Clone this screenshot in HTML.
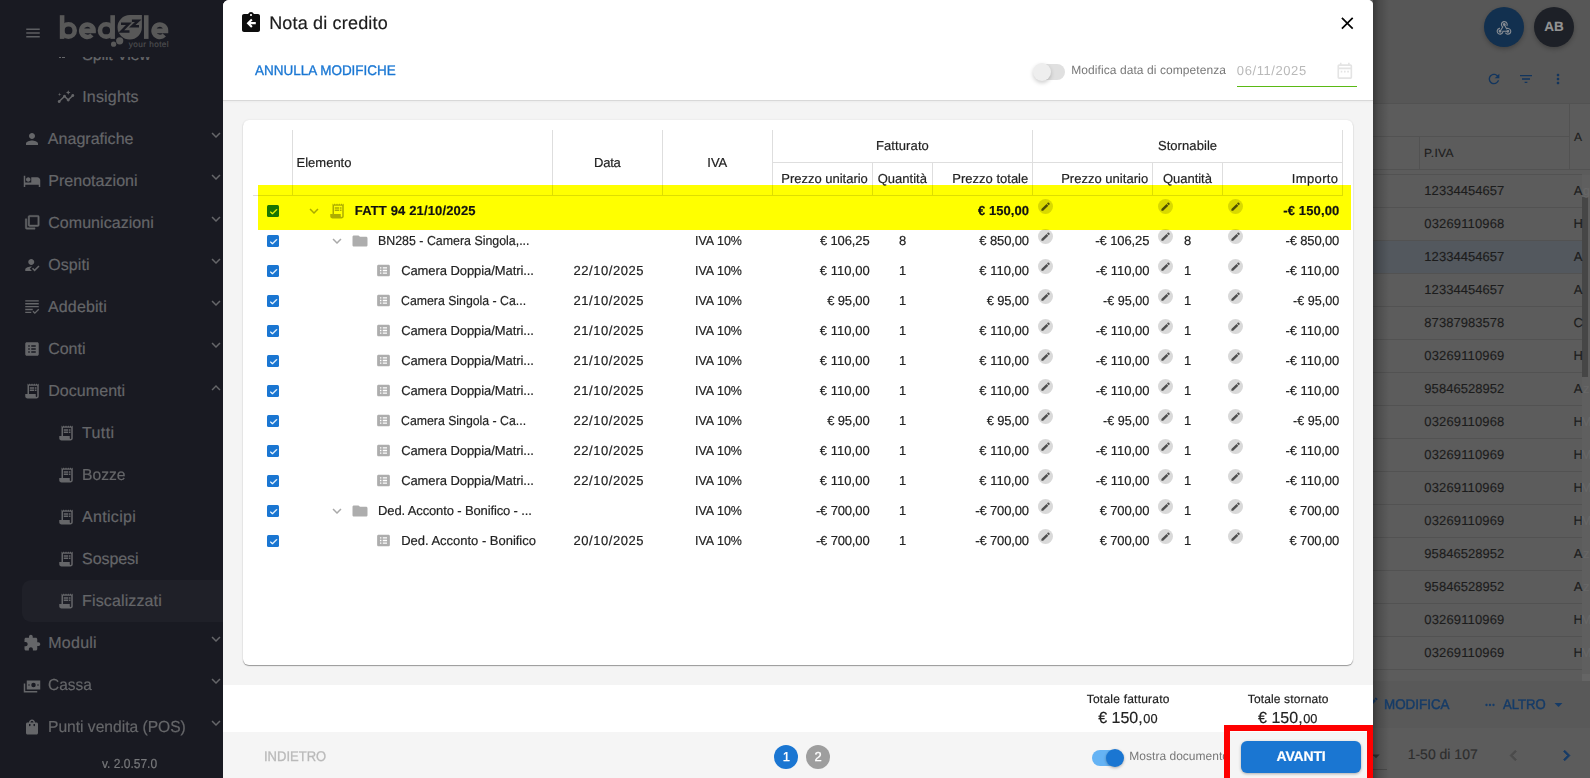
<!DOCTYPE html>
<html lang="it">
<head>
<meta charset="utf-8">
<title>Nota di credito</title>
<style>
*{box-sizing:border-box;margin:0;padding:0}
html,body{width:1590px;height:778px;overflow:hidden;background:#5c5c5c;font-family:"Liberation Sans",sans-serif;text-rendering:geometricPrecision;}
body{position:relative}
.abs{position:absolute;display:block}
.t{position:absolute;white-space:pre;line-height:20px;height:20px;display:block}
#modal .t{-webkit-text-stroke:.18px currentColor}
#side .t{-webkit-text-stroke:.2px currentColor}
#bgp .t{-webkit-text-stroke:.15px currentColor}
#side{position:absolute;left:0;top:0;width:232px;height:778px;background:#191a22;overflow:hidden}
#bgp{position:absolute;left:1373px;top:0;width:217px;height:778px;background:#5c5c5c;overflow:hidden}
#modal{position:absolute;left:223px;top:0;width:1150px;height:778px;background:#f4f4f4;border-radius:6px 5px 0 0;overflow:hidden;isolation:isolate}
#mhead{position:absolute;left:0;top:0;width:1150px;height:100px;background:#fff;box-shadow:0 1px 0 #d8d8d8,0 2px 2px rgba(0,0,0,.04)}
#card{position:absolute;left:20px;top:120px;width:1110px;height:545px;background:#fff;border-radius:6px;box-shadow:0 1px 1px rgba(0,0,0,.36),0 0 2px rgba(0,0,0,.10)}
#totals{position:absolute;left:0;top:685px;width:1150px;height:47px;background:#fff}
#foot{position:absolute;left:0;top:732px;width:1150px;height:46px;background:#f5f5f5}
</style>
</head>
<body>
<div id="bgp">
<div class="abs" style="left:0.00px;top:0.00px;width:217.00px;height:103.00px;background:#575757;"></div>
<div class="abs" style="left:0.00px;top:103.00px;width:217.00px;height:1.00px;background:#525252;"></div>
<div class="abs" style="left:0.00px;top:136.00px;width:196.50px;height:1.00px;background:#525252;"></div>
<div class="abs" style="left:0.00px;top:169.00px;width:217.00px;height:1.00px;background:#525252;"></div>
<div class="abs" style="left:46.00px;top:136.00px;width:1.00px;height:33.00px;background:#525252;"></div>
<div class="abs" style="left:196.00px;top:103.00px;width:1.00px;height:66.00px;background:#525252;"></div>
<div class="abs" style="left:0.00px;top:240.50px;width:209.00px;height:33.00px;background:#53585e;"></div>
<div class="abs" style="left:0.00px;top:174.00px;width:209.00px;height:1.00px;background:#525252;"></div>
<div class="abs" style="left:0.00px;top:207.00px;width:209.00px;height:1.00px;background:#525252;"></div>
<div class="abs" style="left:0.00px;top:240.00px;width:209.00px;height:1.00px;background:#525252;"></div>
<div class="abs" style="left:0.00px;top:273.00px;width:209.00px;height:1.00px;background:#525252;"></div>
<div class="abs" style="left:0.00px;top:306.00px;width:209.00px;height:1.00px;background:#525252;"></div>
<div class="abs" style="left:0.00px;top:339.00px;width:209.00px;height:1.00px;background:#525252;"></div>
<div class="abs" style="left:0.00px;top:372.00px;width:209.00px;height:1.00px;background:#525252;"></div>
<div class="abs" style="left:0.00px;top:405.00px;width:209.00px;height:1.00px;background:#525252;"></div>
<div class="abs" style="left:0.00px;top:438.00px;width:209.00px;height:1.00px;background:#525252;"></div>
<div class="abs" style="left:0.00px;top:471.00px;width:209.00px;height:1.00px;background:#525252;"></div>
<div class="abs" style="left:0.00px;top:504.00px;width:209.00px;height:1.00px;background:#525252;"></div>
<div class="abs" style="left:0.00px;top:537.00px;width:209.00px;height:1.00px;background:#525252;"></div>
<div class="abs" style="left:0.00px;top:570.00px;width:209.00px;height:1.00px;background:#525252;"></div>
<div class="abs" style="left:0.00px;top:603.00px;width:209.00px;height:1.00px;background:#525252;"></div>
<div class="abs" style="left:0.00px;top:636.00px;width:209.00px;height:1.00px;background:#525252;"></div>
<div class="abs" style="left:0.00px;top:669.00px;width:209.00px;height:1.00px;background:#525252;"></div>
<div class="abs" style="left:209.00px;top:174.50px;width:8.00px;height:499.00px;background:#5f5f5f;"></div>
<div class="abs" style="left:209.00px;top:197.00px;width:6.00px;height:180.00px;background:#464646;"></div>
<div class="abs" style="left:209.00px;top:673.50px;width:8.00px;height:7.00px;background:#656565;"></div>
<div class="abs" style="left:0.00px;top:681.00px;width:217.00px;height:47.00px;background:#595959;"></div>
<div class="abs" style="left:0.00px;top:728.00px;width:217.00px;height:50.00px;background:#5c5c5c;"></div>
<div class="abs" style="left:0.00px;top:769.00px;width:14.00px;height:1.00px;background:#4a4a4a;"></div>
<div class="abs" style="left:111.0px;top:6.800px;width:40px;height:40px;border-radius:50%;background:#12304f;box-shadow:0 2px 4px rgba(0,0,0,.25)"></div>
<div class="abs" style="left:161.0px;top:6.800px;width:40px;height:40px;border-radius:50%;background:#1d2027;box-shadow:0 2px 4px rgba(0,0,0,.25)"></div>
<svg class="abs" style="left:122.00px;top:18.50px;" width="18.00" height="18.00" viewBox="0 0 24 24" fill="#878c93" fill-rule="evenodd"><path d="M10.460,19C9,21.070 6.150,21.590 4.090,20.150C2.040,18.710 1.560,15.840 3,13.750C3.870,12.500 5.210,11.830 6.580,11.770L6.630,13.200C5.720,13.270 4.840,13.740 4.270,14.560C3.270,16 3.580,17.940 4.950,18.910C6.330,19.870 8.260,19.500 9.260,18.070C9.570,17.620 9.750,17.130 9.820,16.630V15.620L15.400,15.580L15.470,15.470C16,14.550 17.150,14.230 18.050,14.750C18.950,15.270 19.260,16.430 18.730,17.350C18.200,18.260 17.040,18.580 16.140,18.060C15.730,17.830 15.440,17.460 15.310,17.040L11.240,17.060C11.130,17.730 10.870,18.380 10.460,19M17.740,11.860C20.270,12.170 22.070,14.440 21.760,16.930C21.450,19.430 19.150,21.200 16.620,20.890C15.130,20.710 13.900,19.860 13.190,18.680L14.430,17.960C14.920,18.730 15.750,19.280 16.750,19.410C18.500,19.620 20.050,18.430 20.260,16.760C20.470,15.090 19.230,13.560 17.500,13.350C16.960,13.290 16.440,13.360 15.970,13.530L15.120,13.970L12.540,9.200H12.320C11.260,9.160 10.440,8.290 10.470,7.250C10.500,6.210 11.400,5.400 12.450,5.440C13.500,5.500 14.330,6.350 14.300,7.390C14.280,7.830 14.110,8.230 13.840,8.540L15.740,12.050C16.360,11.850 17.040,11.780 17.740,11.860M8.250,9.140C7.250,6.790 8.310,4.100 10.620,3.120C12.940,2.140 15.620,3.250 16.620,5.600C17.210,6.970 17.090,8.470 16.420,9.670L15.180,8.950C15.600,8.140 15.670,7.150 15.270,6.220C14.590,4.620 12.780,3.850 11.230,4.500C9.670,5.160 8.970,7 9.650,8.600C9.930,9.260 10.400,9.770 10.970,10.110L11.360,10.320L8.290,15.310C8.320,15.360 8.360,15.420 8.390,15.500C8.880,16.410 8.540,17.560 7.620,18.050C6.710,18.540 5.560,18.180 5.060,17.240C4.570,16.310 4.910,15.160 5.830,14.670C6.220,14.460 6.650,14.410 7.060,14.500L9.370,10.730C8.900,10.300 8.500,9.760 8.250,9.140Z"/></svg>
<svg class="abs" style="left:113.20px;top:71.10px;" width="16.00" height="16.00" viewBox="0 0 24 24" fill="#12355e" fill-rule="evenodd"><path d="M17.650 6.350C16.200 4.900 14.210 4 12 4c-4.420 0-7.990 3.580-7.990 8s3.570 8 7.990 8c3.730 0 6.840-2.550 7.730-6h-2.080c-.820 2.330-3.040 4-5.650 4-3.310 0-6-2.690-6-6s2.690-6 6-6c1.660 0 3.140.690 4.220 1.780L13 11h7V4l-2.350 2.350z"/></svg>
<svg class="abs" style="left:145.20px;top:71.10px;" width="16.00" height="16.00" viewBox="0 0 24 24" fill="#12355e" fill-rule="evenodd"><path d="M10 18h4v-2h-4v2zM3 6v2h18V6H3zm3 7h12v-2H6v2z"/></svg>
<svg class="abs" style="left:177.00px;top:71.10px;" width="16.00" height="16.00" viewBox="0 0 24 24" fill="#12355e" fill-rule="evenodd"><path d="M12 8c1.100 0 2-.900 2-2s-.900-2-2-2-2 .900-2 2 .900 2 2 2zm0 2c-1.100 0-2 .900-2 2s.900 2 2 2 2-.900 2-2-.900-2-2-2zm0 6c-1.100 0-2 .900-2 2s.900 2 2 2 2-.900 2-2-.900-2-2-2z"/></svg>
<svg class="abs" style="left:109.50px;top:698.00px;" width="14.00" height="14.00" viewBox="0 0 24 24" fill="#153b67" fill-rule="evenodd"><path d="M6 10c-1.100 0-2 .900-2 2s.900 2 2 2 2-.900 2-2-.900-2-2-2zm12 0c-1.100 0-2 .900-2 2s.900 2 2 2 2-.900 2-2-.900-2-2-2zm-6 0c-1.100 0-2 .900-2 2s.900 2 2 2 2-.900 2-2-.900-2-2-2z"/></svg>
<svg class="abs" style="left:176.10px;top:695.30px;" width="19.00" height="19.00" viewBox="0 0 24 24" fill="#153b67" fill-rule="evenodd"><path d="M7 10l5 5 5-5z"/></svg>
<svg class="abs" style="left:-6.50px;top:695.50px;" width="12.00" height="12.00" viewBox="0 0 24 24" fill="#153b67" fill-rule="evenodd"><path d="M3 17.250V21h3.750L17.810 9.940l-3.750-3.750L3 17.250zM20.710 7.040c.390-.390.390-1.020 0-1.410l-2.340-2.340c-.390-.390-1.020-.390-1.410 0l-1.830 1.830 3.750 3.750 1.830-1.830z"/></svg>
<svg class="abs" style="left:130.40px;top:745.10px;stroke:#4b4b4b;stroke-width:.8px;" width="21.00" height="21.00" viewBox="0 0 24 24" fill="#4b4b4b" fill-rule="evenodd"><path d="M15.410 7.410L14 6l-6 6 6 6 1.410-1.410L10.830 12z"/></svg>
<svg class="abs" style="left:182.70px;top:745.10px;stroke:#153b67;stroke-width:.8px;" width="21.00" height="21.00" viewBox="0 0 24 24" fill="#153b67" fill-rule="evenodd"><path d="M10 6L8.590 7.410 13.170 12l-4.580 4.590L10 18l6-6z"/></svg>
<svg class="abs" style="left:-6.50px;top:746.50px;" width="18.00" height="18.00" viewBox="0 0 24 24" fill="#333" fill-rule="evenodd"><path d="M7 10l5 5 5-5z"/></svg>
<div class="abs" style="left:0;top:0;width:16px;height:778px;background:linear-gradient(90deg,rgba(0,0,0,.34),rgba(0,0,0,.16) 35%,rgba(0,0,0,0))"></div>
<span class="t" style="left:171.30px;top:17px;font-size:13.5px;font-weight:700;color:#939393;letter-spacing:0.000px;">AB</span>
<span class="t" style="left:51.05px;top:143px;font-size:12px;color:#1c1c1c;letter-spacing:0.287px;">P.IVA</span>
<span class="t" style="left:200.99px;top:127px;font-size:12px;color:#1c1c1c;letter-spacing:0.000px;">A</span>
<span class="t" style="left:51.35px;top:181px;font-size:13px;color:#1c1c1c;letter-spacing:0.047px;">12334454657</span>
<span class="t" style="left:200.76px;top:181px;font-size:13px;color:#1c1c1c;letter-spacing:0.000px;">A</span>
<span class="t" style="left:209.63px;top:181px;font-size:13px;color:#686868;letter-spacing:0.000px;">g</span>
<span class="t" style="left:51.35px;top:214px;font-size:13px;color:#1c1c1c;letter-spacing:0.142px;">03269110968</span>
<span class="t" style="left:200.40px;top:214px;font-size:13px;color:#1c1c1c;letter-spacing:0.000px;">H</span>
<span class="t" style="left:51.35px;top:247px;font-size:13px;color:#1c1c1c;letter-spacing:0.047px;">12334454657</span>
<span class="t" style="left:200.76px;top:247px;font-size:13px;color:#1c1c1c;letter-spacing:0.000px;">A</span>
<span class="t" style="left:51.35px;top:280px;font-size:13px;color:#1c1c1c;letter-spacing:0.047px;">12334454657</span>
<span class="t" style="left:200.76px;top:280px;font-size:13px;color:#1c1c1c;letter-spacing:0.000px;">A</span>
<span class="t" style="left:51.35px;top:313px;font-size:13px;color:#1c1c1c;letter-spacing:0.047px;">87387983578</span>
<span class="t" style="left:200.40px;top:313px;font-size:13px;color:#1c1c1c;letter-spacing:0.000px;">C</span>
<span class="t" style="left:51.35px;top:346px;font-size:13px;color:#1c1c1c;letter-spacing:0.142px;">03269110969</span>
<span class="t" style="left:200.40px;top:346px;font-size:13px;color:#1c1c1c;letter-spacing:0.000px;">H</span>
<span class="t" style="left:51.35px;top:379px;font-size:13px;color:#1c1c1c;letter-spacing:0.047px;">95846528952</span>
<span class="t" style="left:200.76px;top:379px;font-size:13px;color:#1c1c1c;letter-spacing:0.000px;">A</span>
<span class="t" style="left:210.00px;top:379px;font-size:13px;color:#686868;letter-spacing:0.000px;">z</span>
<span class="t" style="left:51.35px;top:412px;font-size:13px;color:#1c1c1c;letter-spacing:0.142px;">03269110968</span>
<span class="t" style="left:200.40px;top:412px;font-size:13px;color:#1c1c1c;letter-spacing:0.000px;">H</span>
<span class="t" style="left:207.83px;top:412px;font-size:13px;color:#686868;letter-spacing:0.000px;">M</span>
<span class="t" style="left:51.35px;top:445px;font-size:13px;color:#1c1c1c;letter-spacing:0.142px;">03269110969</span>
<span class="t" style="left:200.40px;top:445px;font-size:13px;color:#1c1c1c;letter-spacing:0.000px;">H</span>
<span class="t" style="left:207.83px;top:445px;font-size:13px;color:#686868;letter-spacing:0.000px;">M</span>
<span class="t" style="left:51.35px;top:478px;font-size:13px;color:#1c1c1c;letter-spacing:0.142px;">03269110969</span>
<span class="t" style="left:200.40px;top:478px;font-size:13px;color:#1c1c1c;letter-spacing:0.000px;">H</span>
<span class="t" style="left:207.83px;top:478px;font-size:13px;color:#686868;letter-spacing:0.000px;">M</span>
<span class="t" style="left:51.35px;top:511px;font-size:13px;color:#1c1c1c;letter-spacing:0.142px;">03269110969</span>
<span class="t" style="left:200.40px;top:511px;font-size:13px;color:#1c1c1c;letter-spacing:0.000px;">H</span>
<span class="t" style="left:207.83px;top:511px;font-size:13px;color:#686868;letter-spacing:0.000px;">M</span>
<span class="t" style="left:51.35px;top:544px;font-size:13px;color:#1c1c1c;letter-spacing:0.047px;">95846528952</span>
<span class="t" style="left:200.76px;top:544px;font-size:13px;color:#1c1c1c;letter-spacing:0.000px;">A</span>
<span class="t" style="left:210.00px;top:544px;font-size:13px;color:#686868;letter-spacing:0.000px;">z</span>
<span class="t" style="left:51.35px;top:577px;font-size:13px;color:#1c1c1c;letter-spacing:0.047px;">95846528952</span>
<span class="t" style="left:200.76px;top:577px;font-size:13px;color:#1c1c1c;letter-spacing:0.000px;">A</span>
<span class="t" style="left:210.00px;top:577px;font-size:13px;color:#686868;letter-spacing:0.000px;">z</span>
<span class="t" style="left:51.35px;top:610px;font-size:13px;color:#1c1c1c;letter-spacing:0.142px;">03269110969</span>
<span class="t" style="left:200.40px;top:610px;font-size:13px;color:#1c1c1c;letter-spacing:0.000px;">H</span>
<span class="t" style="left:207.83px;top:610px;font-size:13px;color:#686868;letter-spacing:0.000px;">M</span>
<span class="t" style="left:51.35px;top:643px;font-size:13px;color:#1c1c1c;letter-spacing:0.142px;">03269110969</span>
<span class="t" style="left:200.40px;top:643px;font-size:13px;color:#1c1c1c;letter-spacing:0.000px;">H</span>
<span class="t" style="left:207.83px;top:643px;font-size:13px;color:#686868;letter-spacing:0.000px;">M</span>
<span class="t" style="left:11.25px;top:694px;font-size:14px;color:#153b67;letter-spacing:0.000px;-webkit-text-stroke:.45px #153b67;transform:scaleX(0.9569);transform-origin:0 0;">MODIFICA</span>
<span class="t" style="left:129.55px;top:694px;font-size:14px;color:#153b67;letter-spacing:0.000px;-webkit-text-stroke:.45px #153b67;transform:scaleX(0.9356);transform-origin:0 0;">ALTRO</span>
<span class="t" style="left:34.65px;top:744px;font-size:14px;color:#2d2d2d;letter-spacing:0.004px;">1-50 di 107</span>
</div>
<div id="side">
<svg class="abs" style="left:24.00px;top:24.10px;" width="18.00" height="18.00" viewBox="0 0 24 24" fill="#5d5e62" fill-rule="evenodd"><path d="M3 18h18v-2H3v2zm0-5h18v-2H3v2zm0-7v2h18V6H3z"/></svg>
<svg class="abs" style="left:0;top:0" width="223" height="56" viewBox="0 0 223 56">
<g fill="none" stroke="#585858" stroke-width="4.6">
<path d="M62.1 15.200V38.900"/><circle cx="68.500" cy="30.450" r="6.200"/>
<path d="M80.600 30.900H93.600A6.200 6.200 0 1 0 91.900 35"/>
<circle cx="106.200" cy="30.450" r="6.200"/><path d="M112.650 15.200V38.900"/>
<path d="M146.250 15.200V38.900"/>
<path d="M153 30.900H166A6.200 6.200 0 1 0 164.300 35"/>
</g>
<path fill="#585858" d="M129.700 15.100H141.900V27.300A12.200 12.200 0 1 1 129.700 15.100z"/>
<circle cx="119.700" cy="40.800" r="3.600" fill="#585858"/><circle cx="113.600" cy="44.200" r="2.600" fill="#585858"/>
<g fill="none" stroke="#191a22" stroke-width="2.500"><path d="M121 23.800H128.800L121.300 31.500H129.500"/><path d="M131.900 20.700H138.300L132.200 26.300H139"/></g>
</svg>
<div class="abs" style="left:22px;top:580px;width:201px;height:42px;background:#1f2028;border-radius:9px 0 0 9px"></div>
<svg class="abs" style="left:57.20px;top:87.70px;" width="18.00" height="18.00" viewBox="0 0 24 24" fill="#656669" fill-rule="evenodd"><path d="M21 8c-1.45 0-2.26 1.44-1.93 2.51l-3.55 3.56c-.3-.09-.74-.09-1.04 0l-2.55-2.55C12.27 10.45 11.46 9 10 9c-1.45 0-2.27 1.44-1.93 2.52l-4.56 4.55C2.44 15.74 1 16.55 1 18c0 1.1.9 2 2 2 1.45 0 2.26-1.44 1.93-2.51l4.55-4.56c.3.09.74.09 1.04 0l2.55 2.55C12.73 16.55 13.54 18 15 18c1.45 0 2.27-1.44 1.93-2.52l3.56-3.55c1.07.33 2.51-.48 2.51-1.93 0-1.1-.9-2-2-2zM15 9l.94-2.07L18 6l-2.06-.93L15 3l-.92 2.07L12 6l2.08.93zM3.5 11L4 9l2-.5L4 8l-.5-2L3 8l-2 .5L3 9z"/></svg>
<svg class="abs" style="left:23.10px;top:129.70px;" width="18.00" height="18.00" viewBox="0 0 24 24" fill="#656669" fill-rule="evenodd"><path d="M12 12c2.21 0 4-1.79 4-4s-1.79-4-4-4-4 1.79-4 4 1.79 4 4 4zm0 2c-2.67 0-8 1.34-8 4v2h16v-2c0-2.66-5.33-4-8-4z"/></svg>
<svg class="abs" style="left:23.10px;top:171.70px;" width="18.00" height="18.00" viewBox="0 0 24 24" fill="#656669" fill-rule="evenodd"><path d="M7 13c1.66 0 3-1.34 3-3S8.660 7 7 7s-3 1.34-3 3 1.34 3 3 3zm12-6h-8v7H3V5H1v15h2v-3h18v3h2v-9c0-2.21-1.79-4-4-4z"/></svg>
<svg class="abs" style="left:23.80px;top:214.30px;stroke:#656669;stroke-width:.7px;" width="16.60" height="16.60" viewBox="0 0 24 24" fill="#656669" fill-rule="evenodd"><path d="M20,16V4H8V16H20M22,16A2,2 0 0,1 20,18H8C6.890,18 6,17.100 6,16V4C6,2.890 6.890,2 8,2H20A2,2 0 0,1 22,4V16M16,20V22H4A2,2 0 0,1 2,20V7H4V20H16Z"/></svg>
<svg class="abs" style="left:23.10px;top:255.70px;" width="18.00" height="18.00" viewBox="0 0 24 24" fill="#656669" fill-rule="evenodd"><path d="M9 17l3-2.940c-.39-.04-.68-.06-1-.06-2.670 0-8 1.340-8 4v2h9l-3-3zm2-5c2.210 0 4-1.790 4-4s-1.790-4-4-4-4 1.790-4 4 1.790 4 4 4zm4.470 8.500L12 17l1.400-1.410 2.070 2.080 5.130-5.170 1.400 1.410z"/></svg>
<svg class="abs" style="left:23.10px;top:297.70px;" width="18.00" height="18.00" viewBox="0 0 24 24" fill="#656669" fill-rule="evenodd"><path d="M3 3h18v1.800H3zM3 6.800h18v1.800H3zM3 10.600h18v1.800H3zM3 14.400h10v1.800H3zM3 18.200h8v1.800H3zM15.800 21.400l-3.200-3.200 1.200-1.200 2 2 4.600-4.600 1.200 1.200z"/></svg>
<svg class="abs" style="left:23.10px;top:339.70px;" width="18.00" height="18.00" viewBox="0 0 24 24" fill="#656669" fill-rule="evenodd"><path d="M19 3H5c-1.100 0-2 .900-2 2v14c0 1.100.900 2 2 2h14c1.100 0 2-.900 2-2V5c0-1.100-.900-2-2-2zM9 17H7v-2h2v2zm0-4H7v-2h2v2zm0-4H7V7h2v2zm8 8h-6v-2h6v2zm0-4h-6v-2h6v2zm0-4h-6V7h6v2z"/></svg>
<svg class="abs" style="left:23.10px;top:381.70px;" width="18.00" height="18.00" viewBox="0 0 24 24" fill="#656669" fill-rule="evenodd"><path d="M19.500 3.500L18 2l-1.500 1.500L15 2l-1.500 1.500L12 2l-1.500 1.500L9 2 7.500 3.500 6 2v14H3v3c0 1.660 1.340 3 3 3h12c1.660 0 3-1.340 3-3V2l-1.500 1.500zM19 19c0 .550-.450 1-1 1s-1-.450-1-1v-3H8V5h11v14zM9 7h6v2H9zM16 7h2v2h-2zM9 10h6v2H9zM16 10h2v2h-2z"/></svg>
<svg class="abs" style="left:57.20px;top:423.70px;" width="18.00" height="18.00" viewBox="0 0 24 24" fill="#656669" fill-rule="evenodd"><path d="M19.500 3.500L18 2l-1.500 1.500L15 2l-1.500 1.500L12 2l-1.500 1.500L9 2 7.500 3.500 6 2v14H3v3c0 1.660 1.340 3 3 3h12c1.660 0 3-1.340 3-3V2l-1.500 1.500zM19 19c0 .550-.450 1-1 1s-1-.450-1-1v-3H8V5h11v14zM9 7h6v2H9zM16 7h2v2h-2zM9 10h6v2H9zM16 10h2v2h-2z"/></svg>
<svg class="abs" style="left:57.20px;top:465.70px;" width="18.00" height="18.00" viewBox="0 0 24 24" fill="#656669" fill-rule="evenodd"><path d="M19.500 3.500L18 2l-1.500 1.500L15 2l-1.500 1.500L12 2l-1.500 1.500L9 2 7.500 3.500 6 2v14H3v3c0 1.660 1.340 3 3 3h12c1.660 0 3-1.340 3-3V2l-1.500 1.500zM19 19c0 .550-.450 1-1 1s-1-.450-1-1v-3H8V5h11v14zM9 7h6v2H9zM16 7h2v2h-2zM9 10h6v2H9zM16 10h2v2h-2z"/></svg>
<svg class="abs" style="left:57.20px;top:507.70px;" width="18.00" height="18.00" viewBox="0 0 24 24" fill="#656669" fill-rule="evenodd"><path d="M19.500 3.500L18 2l-1.500 1.500L15 2l-1.500 1.500L12 2l-1.500 1.500L9 2 7.500 3.500 6 2v14H3v3c0 1.660 1.340 3 3 3h12c1.660 0 3-1.340 3-3V2l-1.500 1.500zM19 19c0 .550-.450 1-1 1s-1-.450-1-1v-3H8V5h11v14zM9 7h6v2H9zM16 7h2v2h-2zM9 10h6v2H9zM16 10h2v2h-2z"/></svg>
<svg class="abs" style="left:57.20px;top:549.70px;" width="18.00" height="18.00" viewBox="0 0 24 24" fill="#656669" fill-rule="evenodd"><path d="M19.500 3.500L18 2l-1.500 1.500L15 2l-1.500 1.500L12 2l-1.500 1.500L9 2 7.500 3.500 6 2v14H3v3c0 1.660 1.340 3 3 3h12c1.660 0 3-1.340 3-3V2l-1.500 1.500zM19 19c0 .550-.450 1-1 1s-1-.450-1-1v-3H8V5h11v14zM9 7h6v2H9zM16 7h2v2h-2zM9 10h6v2H9zM16 10h2v2h-2z"/></svg>
<svg class="abs" style="left:57.20px;top:591.70px;" width="18.00" height="18.00" viewBox="0 0 24 24" fill="#656669" fill-rule="evenodd"><path d="M19.500 3.500L18 2l-1.500 1.500L15 2l-1.500 1.500L12 2l-1.500 1.500L9 2 7.500 3.500 6 2v14H3v3c0 1.660 1.340 3 3 3h12c1.660 0 3-1.340 3-3V2l-1.500 1.500zM19 19c0 .550-.450 1-1 1s-1-.450-1-1v-3H8V5h11v14zM9 7h6v2H9zM16 7h2v2h-2zM9 10h6v2H9zM16 10h2v2h-2z"/></svg>
<svg class="abs" style="left:23.10px;top:633.70px;" width="18.00" height="18.00" viewBox="0 0 24 24" fill="#656669" fill-rule="evenodd"><path d="M20.500 11H19V7c0-1.100-.900-2-2-2h-4V3.500C13 2.120 11.880 1 10.500 1S8 2.120 8 3.500V5H4c-1.100 0-1.990.900-1.990 2v3.800H3.500c1.490 0 2.700 1.210 2.700 2.700s-1.210 2.700-2.700 2.700H2V20c0 1.100.900 2 2 2h3.800v-1.500c0-1.490 1.210-2.700 2.700-2.700 1.490 0 2.700 1.210 2.700 2.700V22H17c1.100 0 2-.900 2-2v-4h1.500c1.380 0 2.500-1.120 2.500-2.500S21.880 11 20.500 11z"/></svg>
<svg class="abs" style="left:23.10px;top:675.70px;" width="18.00" height="18.00" viewBox="0 0 24 24" fill="#656669" fill-rule="evenodd"><path d="M5 6h18v12H5zM14 9a3 3 0 1 0 0 6a3 3 0 1 0 0-6zM8 11a1 1 0 1 0 0 2a1 1 0 1 0 0-2zM20 11a1 1 0 1 0 0 2a1 1 0 1 0 0-2zM1 10h2v10h16v2H1z"/></svg>
<svg class="abs" style="left:23.10px;top:717.70px;" width="18.00" height="18.00" viewBox="0 0 24 24" fill="#656669" fill-rule="evenodd"><path d="M18 6h-2c0-2.210-1.790-4-4-4S8 3.790 8 6H6c-1.100 0-2 .900-2 2v12c0 1.100.900 2 2 2h12c1.100 0 2-.900 2-2V8c0-1.100-.900-2-2-2zm-8 4c0 .550-.450 1-1 1s-1-.450-1-1V8h2v2zm2-6c1.100 0 2 .900 2 2h-4c0-1.100.900-2 2-2zm4 6c0 .550-.450 1-1 1s-1-.450-1-1V8h2v2z"/></svg>
<svg class="abs" style="left:206.90px;top:126.10px;" width="18.00" height="18.00" viewBox="0 0 24 24" fill="#656669" fill-rule="evenodd"><path d="M7.410 8.590L12 13.170l4.590-4.580L18 10l-6 6-6-6 1.410-1.410z"/></svg>
<svg class="abs" style="left:206.90px;top:168.10px;" width="18.00" height="18.00" viewBox="0 0 24 24" fill="#656669" fill-rule="evenodd"><path d="M7.410 8.590L12 13.170l4.590-4.580L18 10l-6 6-6-6 1.410-1.410z"/></svg>
<svg class="abs" style="left:206.90px;top:210.10px;" width="18.00" height="18.00" viewBox="0 0 24 24" fill="#656669" fill-rule="evenodd"><path d="M7.410 8.590L12 13.170l4.590-4.580L18 10l-6 6-6-6 1.410-1.410z"/></svg>
<svg class="abs" style="left:206.90px;top:252.10px;" width="18.00" height="18.00" viewBox="0 0 24 24" fill="#656669" fill-rule="evenodd"><path d="M7.410 8.590L12 13.170l4.590-4.580L18 10l-6 6-6-6 1.410-1.410z"/></svg>
<svg class="abs" style="left:206.90px;top:294.10px;" width="18.00" height="18.00" viewBox="0 0 24 24" fill="#656669" fill-rule="evenodd"><path d="M7.410 8.590L12 13.170l4.590-4.580L18 10l-6 6-6-6 1.410-1.410z"/></svg>
<svg class="abs" style="left:206.90px;top:336.10px;" width="18.00" height="18.00" viewBox="0 0 24 24" fill="#656669" fill-rule="evenodd"><path d="M7.410 8.590L12 13.170l4.590-4.580L18 10l-6 6-6-6 1.410-1.410z"/></svg>
<svg class="abs" style="left:206.90px;top:630.10px;" width="18.00" height="18.00" viewBox="0 0 24 24" fill="#656669" fill-rule="evenodd"><path d="M7.410 8.590L12 13.170l4.590-4.580L18 10l-6 6-6-6 1.410-1.410z"/></svg>
<svg class="abs" style="left:206.90px;top:672.10px;" width="18.00" height="18.00" viewBox="0 0 24 24" fill="#656669" fill-rule="evenodd"><path d="M7.410 8.590L12 13.170l4.590-4.580L18 10l-6 6-6-6 1.410-1.410z"/></svg>
<svg class="abs" style="left:206.90px;top:714.10px;" width="18.00" height="18.00" viewBox="0 0 24 24" fill="#656669" fill-rule="evenodd"><path d="M7.410 8.590L12 13.170l4.590-4.580L18 10l-6 6-6-6 1.410-1.410z"/></svg>
<svg class="abs" style="left:206.90px;top:379.10px;" width="18.00" height="18.00" viewBox="0 0 24 24" fill="#656669" fill-rule="evenodd"><path d="M12 8l-6 6 1.410 1.410L12 10.830l4.590 4.580L18 14z"/></svg>
<div class="abs" style="left:0;top:57px;width:223px;height:10px;overflow:hidden"><div class="abs" style="left:0;top:-57px;width:223px;height:80px"><span class="t" style="left:82.25px;top:46px;font-size:16px;color:#656669;letter-spacing:-0.152px;">Split View</span><div class="abs" style="left:59px;top:56px;width:2.400px;height:2.300px;background:#656669"></div><div class="abs" style="left:62.200px;top:56px;width:2.400px;height:2.300px;background:#656669"></div></div></div>
<span class="t" style="left:128.85px;top:35px;font-size:8.2px;color:#4c4c4e;letter-spacing:0.426px;">your hotel</span>
<span class="t" style="left:82.25px;top:88px;font-size:16px;color:#656669;letter-spacing:0.166px;">Insights</span>
<span class="t" style="left:47.85px;top:130px;font-size:16px;color:#656669;letter-spacing:0.021px;">Anagrafiche</span>
<span class="t" style="left:48.25px;top:172px;font-size:16px;color:#656669;letter-spacing:0.032px;">Prenotazioni</span>
<span class="t" style="left:48.25px;top:214px;font-size:16px;color:#656669;letter-spacing:0.047px;">Comunicazioni</span>
<span class="t" style="left:48.25px;top:256px;font-size:16px;color:#656669;letter-spacing:0.059px;">Ospiti</span>
<span class="t" style="left:48.05px;top:298px;font-size:16px;color:#656669;letter-spacing:0.125px;">Addebiti</span>
<span class="t" style="left:48.25px;top:340px;font-size:16px;color:#656669;letter-spacing:-0.040px;">Conti</span>
<span class="t" style="left:48.25px;top:382px;font-size:16px;color:#656669;letter-spacing:0.052px;">Documenti</span>
<span class="t" style="left:82.05px;top:424px;font-size:16px;color:#656669;letter-spacing:0.367px;">Tutti</span>
<span class="t" style="left:82.05px;top:466px;font-size:16px;color:#656669;letter-spacing:0.000px;transform:scaleX(0.9782);transform-origin:0 0;">Bozze</span>
<span class="t" style="left:82.05px;top:508px;font-size:16px;color:#656669;letter-spacing:0.303px;">Anticipi</span>
<span class="t" style="left:82.05px;top:550px;font-size:16px;color:#656669;letter-spacing:-0.070px;">Sospesi</span>
<span class="t" style="left:82.05px;top:592px;font-size:16px;color:#656669;letter-spacing:0.133px;">Fiscalizzati</span>
<span class="t" style="left:48.25px;top:634px;font-size:16px;color:#656669;letter-spacing:0.252px;">Moduli</span>
<span class="t" style="left:48.25px;top:676px;font-size:16px;color:#656669;letter-spacing:0.000px;transform:scaleX(0.9656);transform-origin:0 0;">Cassa</span>
<span class="t" style="left:48.25px;top:718px;font-size:16px;color:#656669;letter-spacing:0.000px;transform:scaleX(0.9745);transform-origin:0 0;">Punti vendita (POS)</span>
<span class="t" style="left:101.55px;top:754px;font-size:13px;color:#77787b;letter-spacing:0.000px;transform:scaleX(0.9222);transform-origin:0 0;">v. 2.0.57.0</span>
</div>
<div id="modal">
<div id="mhead"></div>
<svg class="abs" style="left:16.10px;top:11.30px;" width="24.00" height="24.00" viewBox="0 0 24 24" fill="#0d0d0d" fill-rule="evenodd"><path d="M19 3h-4.180C14.400 1.840 13.300 1 12 1c-1.300 0-2.400.840-2.820 2H5c-1.100 0-2 .900-2 2v14c0 1.100.900 2 2 2h14c1.100 0 2-.900 2-2V5c0-1.100-.900-2-2-2zm-7 0c.550 0 1 .450 1 1s-.450 1-1 1-1-.450-1-1 .450-1 1-1zM16.800 13.300h-5.100l1.900 1.900-1.500 1.500-4.500-4.500 4.500-4.500 1.500 1.500-1.900 1.900h5.100z"/></svg>
<svg class="abs" style="left:1113.60px;top:12.60px;" width="20.60" height="20.60" viewBox="0 0 24 24" fill="#050505" fill-rule="evenodd"><path d="M19 6.410L17.590 5 12 10.590 6.410 5 5 6.410 10.590 12 5 17.590 6.410 19 12 13.410 17.590 19 19 17.590 13.410 12z"/></svg>
<div class="abs" style="left:812.5px;top:64px;width:29.500px;height:16px;border-radius:8px;background:#e0e0e0"></div>
<div class="abs" style="left:810.0px;top:63.100px;width:18px;height:18px;border-radius:50%;background:#eee;box-shadow:0 2px 4px rgba(0,0,0,.2)"></div>
<svg class="abs" style="left:1112.30px;top:60.90px;" width="19.60" height="19.60" viewBox="0 0 24 24" fill="#e4e4e4" fill-rule="evenodd"><path d="M19 4h-1V2h-2v2H8V2H6v2H5c-1.110 0-1.990.900-1.990 2L3 20c0 1.100.890 2 2 2h14c1.100 0 2-.900 2-2V6c0-1.100-.900-2-2-2zm0 16H5V10h14v10zm0-12H5V6h14v2zM9 14H7v-2h2v2zm4 0h-2v-2h2v2zm4 0h-2v-2h2v2z"/></svg>
<div class="abs" style="left:1014.0px;top:85.600px;width:120px;height:1.400px;background:#5ab914"></div>
<div id="card"></div>
<div class="abs" style="left:69.00px;top:130.00px;width:1.00px;height:65.00px;background:#dedede"></div>
<div class="abs" style="left:329.00px;top:130.00px;width:1.00px;height:65.00px;background:#dedede"></div>
<div class="abs" style="left:439.00px;top:130.00px;width:1.00px;height:65.00px;background:#dedede"></div>
<div class="abs" style="left:549.00px;top:130.00px;width:1.00px;height:65.00px;background:#dedede"></div>
<div class="abs" style="left:809.00px;top:130.00px;width:1.00px;height:65.00px;background:#dedede"></div>
<div class="abs" style="left:1119.00px;top:130.00px;width:1.00px;height:65.00px;background:#dedede"></div>
<div class="abs" style="left:649.00px;top:162.00px;width:1.00px;height:33.00px;background:#dedede"></div>
<div class="abs" style="left:709.00px;top:162.00px;width:1.00px;height:33.00px;background:#dedede"></div>
<div class="abs" style="left:929.00px;top:162.00px;width:1.00px;height:33.00px;background:#dedede"></div>
<div class="abs" style="left:999.00px;top:162.00px;width:1.00px;height:33.00px;background:#dedede"></div>
<div class="abs" style="left:549.00px;top:162.00px;width:571.00px;height:1.00px;background:#dedede"></div>
<div class="abs" style="left:30.00px;top:195.00px;width:1090.00px;height:1.00px;background:#dedede"></div>
<div class="abs" style="left:43.7px;top:204.7px;width:12.800px;height:12.600px;border-radius:1.500px;background:#1a76d2"></div>
<svg class="abs" style="left:45.70px;top:206.50px;stroke:#fff;stroke-width:1.500px;" width="9.20" height="9.20" viewBox="0 0 24 24" fill="#fff" fill-rule="evenodd"><path d="M9 16.170L4.830 12l-1.420 1.410L9 19 21 7l-1.410-1.410z"/></svg>
<svg class="abs" style="left:82.30px;top:201.90px;" width="18.00" height="18.00" viewBox="0 0 24 24" fill="#a9a9a9" fill-rule="evenodd"><path d="M7.410 8.590L12 13.170l4.590-4.580L18 10l-6 6-6-6 1.410-1.410z"/></svg>
<svg class="abs" style="left:105.40px;top:202.00px;" width="18.00" height="18.00" viewBox="0 0 24 24" fill="#adadad" fill-rule="evenodd"><path d="M19.500 3.500L18 2l-1.500 1.500L15 2l-1.500 1.500L12 2l-1.500 1.500L9 2 7.500 3.500 6 2v14H3v3c0 1.660 1.340 3 3 3h12c1.660 0 3-1.340 3-3V2l-1.500 1.500zM19 19c0 .550-.450 1-1 1s-1-.450-1-1v-3H8V5h11v14zM9 7h6v2H9zM16 7h2v2h-2zM9 10h6v2H9zM16 10h2v2h-2z"/></svg>
<div class="abs" style="left:815.0px;top:198.9px;width:15px;height:15px;border-radius:50%;background:#d9d9d9"></div>
<svg class="abs" style="left:817.20px;top:201.00px;" width="11.20" height="11.20" viewBox="0 0 24 24" fill="#4f4f4f" fill-rule="evenodd"><path d="M3 17.250V21h3.750L17.810 9.940l-3.750-3.750L3 17.250zM20.710 7.040c.390-.390.390-1.020 0-1.410l-2.340-2.340c-.390-.390-1.020-.390-1.410 0l-1.830 1.830 3.750 3.750 1.830-1.830z"/></svg>
<div class="abs" style="left:935.0px;top:198.9px;width:15px;height:15px;border-radius:50%;background:#d9d9d9"></div>
<svg class="abs" style="left:937.20px;top:201.00px;" width="11.20" height="11.20" viewBox="0 0 24 24" fill="#4f4f4f" fill-rule="evenodd"><path d="M3 17.250V21h3.750L17.810 9.940l-3.750-3.750L3 17.250zM20.710 7.040c.390-.390.390-1.020 0-1.410l-2.340-2.340c-.390-.390-1.020-.390-1.410 0l-1.830 1.830 3.750 3.750 1.830-1.830z"/></svg>
<div class="abs" style="left:1005.0px;top:198.9px;width:15px;height:15px;border-radius:50%;background:#d9d9d9"></div>
<svg class="abs" style="left:1007.20px;top:201.00px;" width="11.20" height="11.20" viewBox="0 0 24 24" fill="#4f4f4f" fill-rule="evenodd"><path d="M3 17.250V21h3.750L17.810 9.940l-3.750-3.750L3 17.250zM20.710 7.040c.390-.390.390-1.020 0-1.410l-2.340-2.340c-.390-.390-1.020-.390-1.410 0l-1.830 1.830 3.750 3.750 1.830-1.830z"/></svg>
<div class="abs" style="left:43.7px;top:234.7px;width:12.800px;height:12.600px;border-radius:1.500px;background:#1a76d2"></div>
<svg class="abs" style="left:45.70px;top:236.50px;stroke:#fff;stroke-width:1.500px;" width="9.20" height="9.20" viewBox="0 0 24 24" fill="#fff" fill-rule="evenodd"><path d="M9 16.170L4.830 12l-1.420 1.410L9 19 21 7l-1.410-1.410z"/></svg>
<svg class="abs" style="left:104.90px;top:231.90px;" width="18.00" height="18.00" viewBox="0 0 24 24" fill="#a9a9a9" fill-rule="evenodd"><path d="M7.410 8.590L12 13.170l4.590-4.580L18 10l-6 6-6-6 1.410-1.410z"/></svg>
<svg class="abs" style="left:128.20px;top:231.80px;transform:scaleY(.92);" width="18.00" height="18.00" viewBox="0 0 24 24" fill="#adadad" fill-rule="evenodd"><path d="M10 4H4c-1.100 0-1.990.900-1.990 2L2 18c0 1.100.900 2 2 2h16c1.100 0 2-.900 2-2V8c0-1.100-.900-2-2-2h-8l-2-2z"/></svg>
<div class="abs" style="left:815.0px;top:228.9px;width:15px;height:15px;border-radius:50%;background:#d9d9d9"></div>
<svg class="abs" style="left:817.20px;top:231.00px;" width="11.20" height="11.20" viewBox="0 0 24 24" fill="#4f4f4f" fill-rule="evenodd"><path d="M3 17.250V21h3.750L17.810 9.940l-3.750-3.750L3 17.250zM20.710 7.040c.390-.390.390-1.020 0-1.410l-2.340-2.340c-.390-.390-1.020-.390-1.410 0l-1.830 1.830 3.750 3.750 1.830-1.830z"/></svg>
<div class="abs" style="left:935.0px;top:228.9px;width:15px;height:15px;border-radius:50%;background:#d9d9d9"></div>
<svg class="abs" style="left:937.20px;top:231.00px;" width="11.20" height="11.20" viewBox="0 0 24 24" fill="#4f4f4f" fill-rule="evenodd"><path d="M3 17.250V21h3.750L17.810 9.940l-3.750-3.750L3 17.250zM20.710 7.040c.390-.390.390-1.020 0-1.410l-2.340-2.340c-.390-.390-1.020-.390-1.410 0l-1.830 1.830 3.750 3.750 1.830-1.830z"/></svg>
<div class="abs" style="left:1005.0px;top:228.9px;width:15px;height:15px;border-radius:50%;background:#d9d9d9"></div>
<svg class="abs" style="left:1007.20px;top:231.00px;" width="11.20" height="11.20" viewBox="0 0 24 24" fill="#4f4f4f" fill-rule="evenodd"><path d="M3 17.250V21h3.750L17.810 9.940l-3.750-3.750L3 17.250zM20.710 7.040c.390-.390.390-1.020 0-1.410l-2.340-2.340c-.390-.390-1.020-.390-1.410 0l-1.830 1.830 3.750 3.750 1.830-1.830z"/></svg>
<div class="abs" style="left:43.7px;top:264.7px;width:12.800px;height:12.600px;border-radius:1.500px;background:#1a76d2"></div>
<svg class="abs" style="left:45.70px;top:266.50px;stroke:#fff;stroke-width:1.500px;" width="9.20" height="9.20" viewBox="0 0 24 24" fill="#fff" fill-rule="evenodd"><path d="M9 16.170L4.830 12l-1.420 1.410L9 19 21 7l-1.410-1.410z"/></svg>
<svg class="abs" style="left:151.50px;top:262.00px;transform:scaleY(.92);" width="17.00" height="17.00" viewBox="0 0 24 24" fill="#adadad" fill-rule="evenodd"><path d="M19 3H5c-1.100 0-2 .900-2 2v14c0 1.100.900 2 2 2h14c1.100 0 2-.900 2-2V5c0-1.100-.900-2-2-2zM9 17H7v-2h2v2zm0-4H7v-2h2v2zm0-4H7V7h2v2zm8 8h-6v-2h6v2zm0-4h-6v-2h6v2zm0-4h-6V7h6v2z"/></svg>
<div class="abs" style="left:815.0px;top:258.9px;width:15px;height:15px;border-radius:50%;background:#d9d9d9"></div>
<svg class="abs" style="left:817.20px;top:261.00px;" width="11.20" height="11.20" viewBox="0 0 24 24" fill="#4f4f4f" fill-rule="evenodd"><path d="M3 17.250V21h3.750L17.810 9.940l-3.750-3.750L3 17.250zM20.710 7.040c.390-.390.390-1.020 0-1.410l-2.340-2.340c-.390-.390-1.020-.390-1.410 0l-1.830 1.830 3.750 3.750 1.830-1.830z"/></svg>
<div class="abs" style="left:935.0px;top:258.9px;width:15px;height:15px;border-radius:50%;background:#d9d9d9"></div>
<svg class="abs" style="left:937.20px;top:261.00px;" width="11.20" height="11.20" viewBox="0 0 24 24" fill="#4f4f4f" fill-rule="evenodd"><path d="M3 17.250V21h3.750L17.810 9.940l-3.750-3.750L3 17.250zM20.710 7.040c.390-.390.390-1.020 0-1.410l-2.340-2.340c-.390-.390-1.020-.390-1.410 0l-1.830 1.830 3.750 3.750 1.830-1.830z"/></svg>
<div class="abs" style="left:1005.0px;top:258.9px;width:15px;height:15px;border-radius:50%;background:#d9d9d9"></div>
<svg class="abs" style="left:1007.20px;top:261.00px;" width="11.20" height="11.20" viewBox="0 0 24 24" fill="#4f4f4f" fill-rule="evenodd"><path d="M3 17.250V21h3.750L17.810 9.940l-3.750-3.750L3 17.250zM20.710 7.040c.390-.390.390-1.020 0-1.410l-2.340-2.340c-.390-.390-1.020-.390-1.410 0l-1.830 1.830 3.750 3.750 1.830-1.830z"/></svg>
<div class="abs" style="left:43.7px;top:294.7px;width:12.800px;height:12.600px;border-radius:1.500px;background:#1a76d2"></div>
<svg class="abs" style="left:45.70px;top:296.50px;stroke:#fff;stroke-width:1.500px;" width="9.20" height="9.20" viewBox="0 0 24 24" fill="#fff" fill-rule="evenodd"><path d="M9 16.170L4.830 12l-1.420 1.410L9 19 21 7l-1.410-1.410z"/></svg>
<svg class="abs" style="left:151.50px;top:292.00px;transform:scaleY(.92);" width="17.00" height="17.00" viewBox="0 0 24 24" fill="#adadad" fill-rule="evenodd"><path d="M19 3H5c-1.100 0-2 .900-2 2v14c0 1.100.900 2 2 2h14c1.100 0 2-.900 2-2V5c0-1.100-.900-2-2-2zM9 17H7v-2h2v2zm0-4H7v-2h2v2zm0-4H7V7h2v2zm8 8h-6v-2h6v2zm0-4h-6v-2h6v2zm0-4h-6V7h6v2z"/></svg>
<div class="abs" style="left:815.0px;top:288.9px;width:15px;height:15px;border-radius:50%;background:#d9d9d9"></div>
<svg class="abs" style="left:817.20px;top:291.00px;" width="11.20" height="11.20" viewBox="0 0 24 24" fill="#4f4f4f" fill-rule="evenodd"><path d="M3 17.250V21h3.750L17.810 9.940l-3.750-3.750L3 17.250zM20.710 7.040c.390-.390.390-1.020 0-1.410l-2.340-2.340c-.390-.390-1.020-.390-1.410 0l-1.830 1.830 3.750 3.750 1.830-1.830z"/></svg>
<div class="abs" style="left:935.0px;top:288.9px;width:15px;height:15px;border-radius:50%;background:#d9d9d9"></div>
<svg class="abs" style="left:937.20px;top:291.00px;" width="11.20" height="11.20" viewBox="0 0 24 24" fill="#4f4f4f" fill-rule="evenodd"><path d="M3 17.250V21h3.750L17.810 9.940l-3.750-3.750L3 17.250zM20.710 7.040c.390-.390.390-1.020 0-1.410l-2.340-2.340c-.390-.390-1.020-.390-1.410 0l-1.830 1.830 3.750 3.750 1.830-1.830z"/></svg>
<div class="abs" style="left:1005.0px;top:288.9px;width:15px;height:15px;border-radius:50%;background:#d9d9d9"></div>
<svg class="abs" style="left:1007.20px;top:291.00px;" width="11.20" height="11.20" viewBox="0 0 24 24" fill="#4f4f4f" fill-rule="evenodd"><path d="M3 17.250V21h3.750L17.810 9.940l-3.750-3.750L3 17.250zM20.710 7.040c.390-.390.390-1.020 0-1.410l-2.340-2.340c-.390-.390-1.020-.390-1.410 0l-1.830 1.830 3.750 3.750 1.830-1.830z"/></svg>
<div class="abs" style="left:43.7px;top:324.7px;width:12.800px;height:12.600px;border-radius:1.500px;background:#1a76d2"></div>
<svg class="abs" style="left:45.70px;top:326.50px;stroke:#fff;stroke-width:1.500px;" width="9.20" height="9.20" viewBox="0 0 24 24" fill="#fff" fill-rule="evenodd"><path d="M9 16.170L4.830 12l-1.420 1.410L9 19 21 7l-1.410-1.410z"/></svg>
<svg class="abs" style="left:151.50px;top:322.00px;transform:scaleY(.92);" width="17.00" height="17.00" viewBox="0 0 24 24" fill="#adadad" fill-rule="evenodd"><path d="M19 3H5c-1.100 0-2 .900-2 2v14c0 1.100.900 2 2 2h14c1.100 0 2-.900 2-2V5c0-1.100-.900-2-2-2zM9 17H7v-2h2v2zm0-4H7v-2h2v2zm0-4H7V7h2v2zm8 8h-6v-2h6v2zm0-4h-6v-2h6v2zm0-4h-6V7h6v2z"/></svg>
<div class="abs" style="left:815.0px;top:318.9px;width:15px;height:15px;border-radius:50%;background:#d9d9d9"></div>
<svg class="abs" style="left:817.20px;top:321.00px;" width="11.20" height="11.20" viewBox="0 0 24 24" fill="#4f4f4f" fill-rule="evenodd"><path d="M3 17.250V21h3.750L17.810 9.940l-3.750-3.750L3 17.250zM20.710 7.040c.390-.390.390-1.020 0-1.410l-2.340-2.340c-.390-.390-1.020-.390-1.410 0l-1.830 1.830 3.750 3.750 1.830-1.830z"/></svg>
<div class="abs" style="left:935.0px;top:318.9px;width:15px;height:15px;border-radius:50%;background:#d9d9d9"></div>
<svg class="abs" style="left:937.20px;top:321.00px;" width="11.20" height="11.20" viewBox="0 0 24 24" fill="#4f4f4f" fill-rule="evenodd"><path d="M3 17.250V21h3.750L17.810 9.940l-3.750-3.750L3 17.250zM20.710 7.040c.390-.390.390-1.020 0-1.410l-2.340-2.340c-.390-.390-1.020-.390-1.410 0l-1.830 1.830 3.750 3.750 1.830-1.830z"/></svg>
<div class="abs" style="left:1005.0px;top:318.9px;width:15px;height:15px;border-radius:50%;background:#d9d9d9"></div>
<svg class="abs" style="left:1007.20px;top:321.00px;" width="11.20" height="11.20" viewBox="0 0 24 24" fill="#4f4f4f" fill-rule="evenodd"><path d="M3 17.250V21h3.750L17.810 9.940l-3.750-3.750L3 17.250zM20.710 7.040c.390-.390.390-1.020 0-1.410l-2.340-2.340c-.390-.390-1.020-.390-1.410 0l-1.830 1.830 3.750 3.750 1.830-1.830z"/></svg>
<div class="abs" style="left:43.7px;top:354.7px;width:12.800px;height:12.600px;border-radius:1.500px;background:#1a76d2"></div>
<svg class="abs" style="left:45.70px;top:356.50px;stroke:#fff;stroke-width:1.500px;" width="9.20" height="9.20" viewBox="0 0 24 24" fill="#fff" fill-rule="evenodd"><path d="M9 16.170L4.830 12l-1.420 1.410L9 19 21 7l-1.410-1.410z"/></svg>
<svg class="abs" style="left:151.50px;top:352.00px;transform:scaleY(.92);" width="17.00" height="17.00" viewBox="0 0 24 24" fill="#adadad" fill-rule="evenodd"><path d="M19 3H5c-1.100 0-2 .900-2 2v14c0 1.100.900 2 2 2h14c1.100 0 2-.900 2-2V5c0-1.100-.900-2-2-2zM9 17H7v-2h2v2zm0-4H7v-2h2v2zm0-4H7V7h2v2zm8 8h-6v-2h6v2zm0-4h-6v-2h6v2zm0-4h-6V7h6v2z"/></svg>
<div class="abs" style="left:815.0px;top:348.9px;width:15px;height:15px;border-radius:50%;background:#d9d9d9"></div>
<svg class="abs" style="left:817.20px;top:351.00px;" width="11.20" height="11.20" viewBox="0 0 24 24" fill="#4f4f4f" fill-rule="evenodd"><path d="M3 17.250V21h3.750L17.810 9.940l-3.750-3.750L3 17.250zM20.710 7.040c.390-.390.390-1.020 0-1.410l-2.340-2.340c-.390-.390-1.020-.390-1.410 0l-1.830 1.830 3.750 3.750 1.830-1.830z"/></svg>
<div class="abs" style="left:935.0px;top:348.9px;width:15px;height:15px;border-radius:50%;background:#d9d9d9"></div>
<svg class="abs" style="left:937.20px;top:351.00px;" width="11.20" height="11.20" viewBox="0 0 24 24" fill="#4f4f4f" fill-rule="evenodd"><path d="M3 17.250V21h3.750L17.810 9.940l-3.750-3.750L3 17.250zM20.710 7.040c.390-.390.390-1.020 0-1.410l-2.340-2.340c-.390-.390-1.020-.390-1.410 0l-1.830 1.830 3.750 3.750 1.830-1.830z"/></svg>
<div class="abs" style="left:1005.0px;top:348.9px;width:15px;height:15px;border-radius:50%;background:#d9d9d9"></div>
<svg class="abs" style="left:1007.20px;top:351.00px;" width="11.20" height="11.20" viewBox="0 0 24 24" fill="#4f4f4f" fill-rule="evenodd"><path d="M3 17.250V21h3.750L17.810 9.940l-3.750-3.750L3 17.250zM20.710 7.040c.390-.390.390-1.020 0-1.410l-2.340-2.340c-.390-.390-1.020-.390-1.410 0l-1.830 1.830 3.750 3.750 1.830-1.830z"/></svg>
<div class="abs" style="left:43.7px;top:384.7px;width:12.800px;height:12.600px;border-radius:1.500px;background:#1a76d2"></div>
<svg class="abs" style="left:45.70px;top:386.50px;stroke:#fff;stroke-width:1.500px;" width="9.20" height="9.20" viewBox="0 0 24 24" fill="#fff" fill-rule="evenodd"><path d="M9 16.170L4.830 12l-1.420 1.410L9 19 21 7l-1.410-1.410z"/></svg>
<svg class="abs" style="left:151.50px;top:382.00px;transform:scaleY(.92);" width="17.00" height="17.00" viewBox="0 0 24 24" fill="#adadad" fill-rule="evenodd"><path d="M19 3H5c-1.100 0-2 .900-2 2v14c0 1.100.900 2 2 2h14c1.100 0 2-.900 2-2V5c0-1.100-.900-2-2-2zM9 17H7v-2h2v2zm0-4H7v-2h2v2zm0-4H7V7h2v2zm8 8h-6v-2h6v2zm0-4h-6v-2h6v2zm0-4h-6V7h6v2z"/></svg>
<div class="abs" style="left:815.0px;top:378.9px;width:15px;height:15px;border-radius:50%;background:#d9d9d9"></div>
<svg class="abs" style="left:817.20px;top:381.00px;" width="11.20" height="11.20" viewBox="0 0 24 24" fill="#4f4f4f" fill-rule="evenodd"><path d="M3 17.250V21h3.750L17.810 9.940l-3.750-3.750L3 17.250zM20.710 7.040c.390-.390.390-1.020 0-1.410l-2.340-2.340c-.390-.390-1.020-.390-1.410 0l-1.830 1.830 3.750 3.750 1.830-1.830z"/></svg>
<div class="abs" style="left:935.0px;top:378.9px;width:15px;height:15px;border-radius:50%;background:#d9d9d9"></div>
<svg class="abs" style="left:937.20px;top:381.00px;" width="11.20" height="11.20" viewBox="0 0 24 24" fill="#4f4f4f" fill-rule="evenodd"><path d="M3 17.250V21h3.750L17.810 9.940l-3.750-3.750L3 17.250zM20.710 7.040c.390-.390.390-1.020 0-1.410l-2.340-2.340c-.390-.390-1.020-.390-1.410 0l-1.830 1.830 3.750 3.750 1.830-1.830z"/></svg>
<div class="abs" style="left:1005.0px;top:378.9px;width:15px;height:15px;border-radius:50%;background:#d9d9d9"></div>
<svg class="abs" style="left:1007.20px;top:381.00px;" width="11.20" height="11.20" viewBox="0 0 24 24" fill="#4f4f4f" fill-rule="evenodd"><path d="M3 17.250V21h3.750L17.810 9.940l-3.750-3.750L3 17.250zM20.710 7.040c.390-.390.390-1.020 0-1.410l-2.340-2.340c-.390-.390-1.020-.390-1.410 0l-1.830 1.830 3.750 3.750 1.830-1.830z"/></svg>
<div class="abs" style="left:43.7px;top:414.7px;width:12.800px;height:12.600px;border-radius:1.500px;background:#1a76d2"></div>
<svg class="abs" style="left:45.70px;top:416.50px;stroke:#fff;stroke-width:1.500px;" width="9.20" height="9.20" viewBox="0 0 24 24" fill="#fff" fill-rule="evenodd"><path d="M9 16.170L4.830 12l-1.420 1.410L9 19 21 7l-1.410-1.410z"/></svg>
<svg class="abs" style="left:151.50px;top:412.00px;transform:scaleY(.92);" width="17.00" height="17.00" viewBox="0 0 24 24" fill="#adadad" fill-rule="evenodd"><path d="M19 3H5c-1.100 0-2 .900-2 2v14c0 1.100.900 2 2 2h14c1.100 0 2-.900 2-2V5c0-1.100-.900-2-2-2zM9 17H7v-2h2v2zm0-4H7v-2h2v2zm0-4H7V7h2v2zm8 8h-6v-2h6v2zm0-4h-6v-2h6v2zm0-4h-6V7h6v2z"/></svg>
<div class="abs" style="left:815.0px;top:408.9px;width:15px;height:15px;border-radius:50%;background:#d9d9d9"></div>
<svg class="abs" style="left:817.20px;top:411.00px;" width="11.20" height="11.20" viewBox="0 0 24 24" fill="#4f4f4f" fill-rule="evenodd"><path d="M3 17.250V21h3.750L17.810 9.940l-3.750-3.750L3 17.250zM20.710 7.040c.390-.390.390-1.020 0-1.410l-2.340-2.340c-.390-.390-1.020-.390-1.410 0l-1.830 1.830 3.750 3.750 1.830-1.830z"/></svg>
<div class="abs" style="left:935.0px;top:408.9px;width:15px;height:15px;border-radius:50%;background:#d9d9d9"></div>
<svg class="abs" style="left:937.20px;top:411.00px;" width="11.20" height="11.20" viewBox="0 0 24 24" fill="#4f4f4f" fill-rule="evenodd"><path d="M3 17.250V21h3.750L17.810 9.940l-3.750-3.750L3 17.250zM20.710 7.040c.390-.390.390-1.020 0-1.410l-2.340-2.340c-.390-.390-1.020-.390-1.410 0l-1.830 1.830 3.750 3.750 1.830-1.830z"/></svg>
<div class="abs" style="left:1005.0px;top:408.9px;width:15px;height:15px;border-radius:50%;background:#d9d9d9"></div>
<svg class="abs" style="left:1007.20px;top:411.00px;" width="11.20" height="11.20" viewBox="0 0 24 24" fill="#4f4f4f" fill-rule="evenodd"><path d="M3 17.250V21h3.750L17.810 9.940l-3.750-3.750L3 17.250zM20.710 7.040c.390-.390.390-1.020 0-1.410l-2.340-2.340c-.390-.390-1.020-.390-1.410 0l-1.830 1.830 3.750 3.750 1.830-1.830z"/></svg>
<div class="abs" style="left:43.7px;top:444.7px;width:12.800px;height:12.600px;border-radius:1.500px;background:#1a76d2"></div>
<svg class="abs" style="left:45.70px;top:446.50px;stroke:#fff;stroke-width:1.500px;" width="9.20" height="9.20" viewBox="0 0 24 24" fill="#fff" fill-rule="evenodd"><path d="M9 16.170L4.830 12l-1.420 1.410L9 19 21 7l-1.410-1.410z"/></svg>
<svg class="abs" style="left:151.50px;top:442.00px;transform:scaleY(.92);" width="17.00" height="17.00" viewBox="0 0 24 24" fill="#adadad" fill-rule="evenodd"><path d="M19 3H5c-1.100 0-2 .900-2 2v14c0 1.100.900 2 2 2h14c1.100 0 2-.900 2-2V5c0-1.100-.900-2-2-2zM9 17H7v-2h2v2zm0-4H7v-2h2v2zm0-4H7V7h2v2zm8 8h-6v-2h6v2zm0-4h-6v-2h6v2zm0-4h-6V7h6v2z"/></svg>
<div class="abs" style="left:815.0px;top:438.9px;width:15px;height:15px;border-radius:50%;background:#d9d9d9"></div>
<svg class="abs" style="left:817.20px;top:441.00px;" width="11.20" height="11.20" viewBox="0 0 24 24" fill="#4f4f4f" fill-rule="evenodd"><path d="M3 17.250V21h3.750L17.810 9.940l-3.750-3.750L3 17.250zM20.710 7.040c.390-.390.390-1.020 0-1.410l-2.340-2.340c-.390-.390-1.020-.390-1.410 0l-1.830 1.830 3.750 3.750 1.830-1.830z"/></svg>
<div class="abs" style="left:935.0px;top:438.9px;width:15px;height:15px;border-radius:50%;background:#d9d9d9"></div>
<svg class="abs" style="left:937.20px;top:441.00px;" width="11.20" height="11.20" viewBox="0 0 24 24" fill="#4f4f4f" fill-rule="evenodd"><path d="M3 17.250V21h3.750L17.810 9.940l-3.750-3.750L3 17.250zM20.710 7.040c.390-.390.390-1.020 0-1.410l-2.340-2.340c-.390-.390-1.020-.390-1.410 0l-1.830 1.830 3.750 3.750 1.830-1.830z"/></svg>
<div class="abs" style="left:1005.0px;top:438.9px;width:15px;height:15px;border-radius:50%;background:#d9d9d9"></div>
<svg class="abs" style="left:1007.20px;top:441.00px;" width="11.20" height="11.20" viewBox="0 0 24 24" fill="#4f4f4f" fill-rule="evenodd"><path d="M3 17.250V21h3.750L17.810 9.940l-3.750-3.750L3 17.250zM20.710 7.040c.390-.390.390-1.020 0-1.410l-2.340-2.340c-.390-.390-1.020-.390-1.410 0l-1.830 1.830 3.750 3.750 1.830-1.830z"/></svg>
<div class="abs" style="left:43.7px;top:474.7px;width:12.800px;height:12.600px;border-radius:1.500px;background:#1a76d2"></div>
<svg class="abs" style="left:45.70px;top:476.50px;stroke:#fff;stroke-width:1.500px;" width="9.20" height="9.20" viewBox="0 0 24 24" fill="#fff" fill-rule="evenodd"><path d="M9 16.170L4.830 12l-1.420 1.410L9 19 21 7l-1.410-1.410z"/></svg>
<svg class="abs" style="left:151.50px;top:472.00px;transform:scaleY(.92);" width="17.00" height="17.00" viewBox="0 0 24 24" fill="#adadad" fill-rule="evenodd"><path d="M19 3H5c-1.100 0-2 .900-2 2v14c0 1.100.900 2 2 2h14c1.100 0 2-.900 2-2V5c0-1.100-.900-2-2-2zM9 17H7v-2h2v2zm0-4H7v-2h2v2zm0-4H7V7h2v2zm8 8h-6v-2h6v2zm0-4h-6v-2h6v2zm0-4h-6V7h6v2z"/></svg>
<div class="abs" style="left:815.0px;top:468.9px;width:15px;height:15px;border-radius:50%;background:#d9d9d9"></div>
<svg class="abs" style="left:817.20px;top:471.00px;" width="11.20" height="11.20" viewBox="0 0 24 24" fill="#4f4f4f" fill-rule="evenodd"><path d="M3 17.250V21h3.750L17.810 9.940l-3.750-3.750L3 17.250zM20.710 7.040c.390-.390.390-1.020 0-1.410l-2.340-2.340c-.390-.390-1.020-.390-1.410 0l-1.830 1.830 3.750 3.750 1.830-1.830z"/></svg>
<div class="abs" style="left:935.0px;top:468.9px;width:15px;height:15px;border-radius:50%;background:#d9d9d9"></div>
<svg class="abs" style="left:937.20px;top:471.00px;" width="11.20" height="11.20" viewBox="0 0 24 24" fill="#4f4f4f" fill-rule="evenodd"><path d="M3 17.250V21h3.750L17.810 9.940l-3.750-3.750L3 17.250zM20.710 7.040c.390-.390.390-1.020 0-1.410l-2.340-2.340c-.390-.390-1.020-.390-1.410 0l-1.830 1.830 3.750 3.750 1.830-1.830z"/></svg>
<div class="abs" style="left:1005.0px;top:468.9px;width:15px;height:15px;border-radius:50%;background:#d9d9d9"></div>
<svg class="abs" style="left:1007.20px;top:471.00px;" width="11.20" height="11.20" viewBox="0 0 24 24" fill="#4f4f4f" fill-rule="evenodd"><path d="M3 17.250V21h3.750L17.810 9.940l-3.750-3.750L3 17.250zM20.710 7.040c.390-.390.390-1.020 0-1.410l-2.340-2.340c-.390-.390-1.020-.390-1.410 0l-1.830 1.830 3.750 3.750 1.830-1.830z"/></svg>
<div class="abs" style="left:43.7px;top:504.7px;width:12.800px;height:12.600px;border-radius:1.500px;background:#1a76d2"></div>
<svg class="abs" style="left:45.70px;top:506.50px;stroke:#fff;stroke-width:1.500px;" width="9.20" height="9.20" viewBox="0 0 24 24" fill="#fff" fill-rule="evenodd"><path d="M9 16.170L4.830 12l-1.420 1.410L9 19 21 7l-1.410-1.410z"/></svg>
<svg class="abs" style="left:104.90px;top:501.90px;" width="18.00" height="18.00" viewBox="0 0 24 24" fill="#a9a9a9" fill-rule="evenodd"><path d="M7.410 8.590L12 13.170l4.590-4.580L18 10l-6 6-6-6 1.410-1.410z"/></svg>
<svg class="abs" style="left:128.20px;top:501.80px;transform:scaleY(.92);" width="18.00" height="18.00" viewBox="0 0 24 24" fill="#adadad" fill-rule="evenodd"><path d="M10 4H4c-1.100 0-1.990.900-1.990 2L2 18c0 1.100.900 2 2 2h16c1.100 0 2-.900 2-2V8c0-1.100-.900-2-2-2h-8l-2-2z"/></svg>
<div class="abs" style="left:815.0px;top:498.9px;width:15px;height:15px;border-radius:50%;background:#d9d9d9"></div>
<svg class="abs" style="left:817.20px;top:501.00px;" width="11.20" height="11.20" viewBox="0 0 24 24" fill="#4f4f4f" fill-rule="evenodd"><path d="M3 17.250V21h3.750L17.810 9.940l-3.750-3.750L3 17.250zM20.710 7.040c.390-.390.390-1.020 0-1.410l-2.340-2.340c-.390-.390-1.020-.390-1.410 0l-1.830 1.830 3.750 3.750 1.830-1.830z"/></svg>
<div class="abs" style="left:935.0px;top:498.9px;width:15px;height:15px;border-radius:50%;background:#d9d9d9"></div>
<svg class="abs" style="left:937.20px;top:501.00px;" width="11.20" height="11.20" viewBox="0 0 24 24" fill="#4f4f4f" fill-rule="evenodd"><path d="M3 17.250V21h3.750L17.810 9.940l-3.750-3.750L3 17.250zM20.710 7.040c.390-.390.390-1.020 0-1.410l-2.340-2.340c-.390-.390-1.020-.390-1.410 0l-1.830 1.830 3.750 3.750 1.830-1.830z"/></svg>
<div class="abs" style="left:1005.0px;top:498.9px;width:15px;height:15px;border-radius:50%;background:#d9d9d9"></div>
<svg class="abs" style="left:1007.20px;top:501.00px;" width="11.20" height="11.20" viewBox="0 0 24 24" fill="#4f4f4f" fill-rule="evenodd"><path d="M3 17.250V21h3.750L17.810 9.940l-3.750-3.750L3 17.250zM20.710 7.040c.390-.390.390-1.020 0-1.410l-2.340-2.340c-.390-.390-1.020-.390-1.410 0l-1.830 1.830 3.750 3.750 1.830-1.830z"/></svg>
<div class="abs" style="left:43.7px;top:534.7px;width:12.800px;height:12.600px;border-radius:1.500px;background:#1a76d2"></div>
<svg class="abs" style="left:45.70px;top:536.50px;stroke:#fff;stroke-width:1.500px;" width="9.20" height="9.20" viewBox="0 0 24 24" fill="#fff" fill-rule="evenodd"><path d="M9 16.170L4.830 12l-1.420 1.410L9 19 21 7l-1.410-1.410z"/></svg>
<svg class="abs" style="left:151.50px;top:532.00px;transform:scaleY(.92);" width="17.00" height="17.00" viewBox="0 0 24 24" fill="#adadad" fill-rule="evenodd"><path d="M19 3H5c-1.100 0-2 .900-2 2v14c0 1.100.900 2 2 2h14c1.100 0 2-.900 2-2V5c0-1.100-.900-2-2-2zM9 17H7v-2h2v2zm0-4H7v-2h2v2zm0-4H7V7h2v2zm8 8h-6v-2h6v2zm0-4h-6v-2h6v2zm0-4h-6V7h6v2z"/></svg>
<div class="abs" style="left:815.0px;top:528.9px;width:15px;height:15px;border-radius:50%;background:#d9d9d9"></div>
<svg class="abs" style="left:817.20px;top:531.00px;" width="11.20" height="11.20" viewBox="0 0 24 24" fill="#4f4f4f" fill-rule="evenodd"><path d="M3 17.250V21h3.750L17.810 9.940l-3.750-3.750L3 17.250zM20.710 7.040c.390-.390.390-1.020 0-1.410l-2.340-2.340c-.390-.390-1.020-.390-1.410 0l-1.830 1.830 3.750 3.750 1.830-1.830z"/></svg>
<div class="abs" style="left:935.0px;top:528.9px;width:15px;height:15px;border-radius:50%;background:#d9d9d9"></div>
<svg class="abs" style="left:937.20px;top:531.00px;" width="11.20" height="11.20" viewBox="0 0 24 24" fill="#4f4f4f" fill-rule="evenodd"><path d="M3 17.250V21h3.750L17.810 9.940l-3.750-3.750L3 17.250zM20.710 7.040c.390-.390.390-1.020 0-1.410l-2.340-2.340c-.390-.390-1.020-.390-1.410 0l-1.830 1.830 3.750 3.750 1.830-1.830z"/></svg>
<div class="abs" style="left:1005.0px;top:528.9px;width:15px;height:15px;border-radius:50%;background:#d9d9d9"></div>
<svg class="abs" style="left:1007.20px;top:531.00px;" width="11.20" height="11.20" viewBox="0 0 24 24" fill="#4f4f4f" fill-rule="evenodd"><path d="M3 17.250V21h3.750L17.810 9.940l-3.750-3.750L3 17.250zM20.710 7.040c.390-.390.390-1.020 0-1.410l-2.340-2.340c-.390-.390-1.020-.390-1.410 0l-1.830 1.830 3.750 3.750 1.830-1.830z"/></svg>
<div class="abs" style="left:35.0px;top:185.300px;width:1093.400px;height:44.700px;background:#ffff00;mix-blend-mode:multiply"></div>
<div id="totals"></div>
<div id="foot"></div>
<div class="abs" style="left:551.0px;top:744.700px;width:24px;height:24px;border-radius:50%;background:#1a76d2"></div>
<div class="abs" style="left:583.0px;top:744.700px;width:24px;height:24px;border-radius:50%;background:#9e9e9e"></div>
<div class="abs" style="left:868.8px;top:750px;width:31px;height:16px;border-radius:8px;background:#65b3f4"></div>
<div class="abs" style="left:882.8px;top:748.700px;width:18.400px;height:18.400px;border-radius:50%;background:#1a76d2;box-shadow:0 1px 3px rgba(0,0,0,.3)"></div>
<div class="abs" style="left:1017.7px;top:741px;width:120.600px;height:32px;border-radius:6px;background:#1a76d2;box-shadow:0 1px 3px rgba(0,0,0,.3)"></div>
<span class="t" style="left:46.15px;top:13px;font-size:18px;color:#1d1d1d;letter-spacing:0.181px;">Nota di credito</span>
<span class="t" style="left:31.75px;top:60px;font-size:14px;color:#1a77d3;letter-spacing:0.000px;-webkit-text-stroke:.35px #1a77d3;transform:scaleX(0.9627);transform-origin:0 0;">ANNULLA MODIFICHE</span>
<span class="t" style="left:848.15px;top:60px;font-size:12px;color:#787878;letter-spacing:0.082px;-webkit-text-stroke:0;">Modifica data di competenza</span>
<span class="t" style="left:1013.85px;top:61px;font-size:13px;color:#b9b9b9;letter-spacing:0.577px;-webkit-text-stroke:0;">06/11/2025</span>
<span class="t" style="left:73.55px;top:153px;font-size:13px;color:#222;letter-spacing:-0.003px;">Elemento</span>
<span class="t" style="left:370.95px;top:153px;font-size:13px;color:#222;letter-spacing:-0.190px;">Data</span>
<span class="t" style="left:484.35px;top:153px;font-size:13px;color:#222;letter-spacing:-0.050px;">IVA</span>
<span class="t" style="left:652.95px;top:136px;font-size:13px;color:#222;letter-spacing:0.109px;">Fatturato</span>
<span class="t" style="left:934.90px;top:136px;font-size:13px;color:#222;letter-spacing:0.073px;">Stornabile</span>
<span class="t" style="left:558.35px;top:169px;font-size:13px;color:#222;letter-spacing:-0.016px;">Prezzo unitario</span>
<span class="t" style="left:654.75px;top:169px;font-size:13px;color:#222;letter-spacing:0.006px;">Quantità</span>
<span class="t" style="left:729.35px;top:169px;font-size:13px;color:#222;letter-spacing:0.002px;">Prezzo totale</span>
<span class="t" style="left:838.15px;top:169px;font-size:13px;color:#222;letter-spacing:0.020px;">Prezzo unitario</span>
<span class="t" style="left:939.95px;top:169px;font-size:13px;color:#222;letter-spacing:-0.022px;">Quantità</span>
<span class="t" style="left:1068.85px;top:169px;font-size:13px;color:#222;letter-spacing:0.354px;">Importo</span>
<span class="t" style="left:131.85px;top:201px;font-size:13px;font-weight:700;color:#111;letter-spacing:0.142px;">FATT 94 21/10/2025</span>
<span class="t" style="left:755.05px;top:201px;font-size:13px;font-weight:700;color:#111;letter-spacing:0.056px;">€ 150,00</span>
<span class="t" style="left:1060.25px;top:201px;font-size:13px;font-weight:700;color:#111;letter-spacing:0.133px;">-€ 150,00</span>
<span class="t" style="left:155.05px;top:231px;font-size:13px;color:#222;letter-spacing:0.000px;transform:scaleX(0.9530);transform-origin:0 0;">BN285 - Camera Singola,...</span>
<span class="t" style="left:471.75px;top:231px;font-size:13px;color:#222;letter-spacing:0.000px;transform:scaleX(0.9590);transform-origin:0 0;">IVA 10%</span>
<span class="t" style="left:596.95px;top:231px;font-size:13px;color:#222;letter-spacing:-0.130px;">€ 106,25</span>
<span class="t" style="left:675.98px;top:231px;font-size:13px;color:#222;letter-spacing:0.000px;">8</span>
<span class="t" style="left:756.35px;top:231px;font-size:13px;color:#222;letter-spacing:-0.130px;">€ 850,00</span>
<span class="t" style="left:872.35px;top:231px;font-size:13px;color:#222;letter-spacing:-0.105px;">-€ 106,25</span>
<span class="t" style="left:961.08px;top:231px;font-size:13px;color:#222;letter-spacing:0.000px;">8</span>
<span class="t" style="left:1062.55px;top:231px;font-size:13px;color:#222;letter-spacing:-0.155px;">-€ 850,00</span>
<span class="t" style="left:178.15px;top:261px;font-size:13px;color:#222;letter-spacing:-0.076px;">Camera Doppia/Matri...</span>
<span class="t" style="left:350.55px;top:261px;font-size:13px;color:#222;letter-spacing:0.536px;">22/10/2025</span>
<span class="t" style="left:471.75px;top:261px;font-size:13px;color:#222;letter-spacing:0.000px;transform:scaleX(0.9590);transform-origin:0 0;">IVA 10%</span>
<span class="t" style="left:596.85px;top:261px;font-size:13px;color:#222;letter-spacing:0.023px;">€ 110,00</span>
<span class="t" style="left:675.98px;top:261px;font-size:13px;color:#222;letter-spacing:0.000px;">1</span>
<span class="t" style="left:756.25px;top:261px;font-size:13px;color:#222;letter-spacing:0.023px;">€ 110,00</span>
<span class="t" style="left:872.75px;top:261px;font-size:13px;color:#222;letter-spacing:-0.034px;">-€ 110,00</span>
<span class="t" style="left:961.08px;top:261px;font-size:13px;color:#222;letter-spacing:0.000px;">1</span>
<span class="t" style="left:1062.55px;top:261px;font-size:13px;color:#222;letter-spacing:-0.034px;">-€ 110,00</span>
<span class="t" style="left:178.15px;top:291px;font-size:13px;color:#222;letter-spacing:0.000px;transform:scaleX(0.9460);transform-origin:0 0;">Camera Singola - Ca...</span>
<span class="t" style="left:350.55px;top:291px;font-size:13px;color:#222;letter-spacing:0.536px;">21/10/2025</span>
<span class="t" style="left:471.75px;top:291px;font-size:13px;color:#222;letter-spacing:0.000px;transform:scaleX(0.9590);transform-origin:0 0;">IVA 10%</span>
<span class="t" style="left:604.25px;top:291px;font-size:13px;color:#222;letter-spacing:-0.163px;">€ 95,00</span>
<span class="t" style="left:675.98px;top:291px;font-size:13px;color:#222;letter-spacing:0.000px;">1</span>
<span class="t" style="left:763.65px;top:291px;font-size:13px;color:#222;letter-spacing:-0.163px;">€ 95,00</span>
<span class="t" style="left:880.25px;top:291px;font-size:13px;color:#222;letter-spacing:0.000px;transform:scaleX(0.9685);transform-origin:0 0;">-€ 95,00</span>
<span class="t" style="left:961.08px;top:291px;font-size:13px;color:#222;letter-spacing:0.000px;">1</span>
<span class="t" style="left:1070.05px;top:291px;font-size:13px;color:#222;letter-spacing:0.000px;transform:scaleX(0.9685);transform-origin:0 0;">-€ 95,00</span>
<span class="t" style="left:178.15px;top:321px;font-size:13px;color:#222;letter-spacing:-0.076px;">Camera Doppia/Matri...</span>
<span class="t" style="left:350.55px;top:321px;font-size:13px;color:#222;letter-spacing:0.536px;">21/10/2025</span>
<span class="t" style="left:471.75px;top:321px;font-size:13px;color:#222;letter-spacing:0.000px;transform:scaleX(0.9590);transform-origin:0 0;">IVA 10%</span>
<span class="t" style="left:596.85px;top:321px;font-size:13px;color:#222;letter-spacing:0.023px;">€ 110,00</span>
<span class="t" style="left:675.98px;top:321px;font-size:13px;color:#222;letter-spacing:0.000px;">1</span>
<span class="t" style="left:756.25px;top:321px;font-size:13px;color:#222;letter-spacing:0.023px;">€ 110,00</span>
<span class="t" style="left:872.75px;top:321px;font-size:13px;color:#222;letter-spacing:-0.034px;">-€ 110,00</span>
<span class="t" style="left:961.08px;top:321px;font-size:13px;color:#222;letter-spacing:0.000px;">1</span>
<span class="t" style="left:1062.55px;top:321px;font-size:13px;color:#222;letter-spacing:-0.034px;">-€ 110,00</span>
<span class="t" style="left:178.15px;top:351px;font-size:13px;color:#222;letter-spacing:-0.076px;">Camera Doppia/Matri...</span>
<span class="t" style="left:350.55px;top:351px;font-size:13px;color:#222;letter-spacing:0.536px;">21/10/2025</span>
<span class="t" style="left:471.75px;top:351px;font-size:13px;color:#222;letter-spacing:0.000px;transform:scaleX(0.9590);transform-origin:0 0;">IVA 10%</span>
<span class="t" style="left:596.85px;top:351px;font-size:13px;color:#222;letter-spacing:0.023px;">€ 110,00</span>
<span class="t" style="left:675.98px;top:351px;font-size:13px;color:#222;letter-spacing:0.000px;">1</span>
<span class="t" style="left:756.25px;top:351px;font-size:13px;color:#222;letter-spacing:0.023px;">€ 110,00</span>
<span class="t" style="left:872.75px;top:351px;font-size:13px;color:#222;letter-spacing:-0.034px;">-€ 110,00</span>
<span class="t" style="left:961.08px;top:351px;font-size:13px;color:#222;letter-spacing:0.000px;">1</span>
<span class="t" style="left:1062.55px;top:351px;font-size:13px;color:#222;letter-spacing:-0.034px;">-€ 110,00</span>
<span class="t" style="left:178.15px;top:381px;font-size:13px;color:#222;letter-spacing:-0.076px;">Camera Doppia/Matri...</span>
<span class="t" style="left:350.55px;top:381px;font-size:13px;color:#222;letter-spacing:0.536px;">21/10/2025</span>
<span class="t" style="left:471.75px;top:381px;font-size:13px;color:#222;letter-spacing:0.000px;transform:scaleX(0.9590);transform-origin:0 0;">IVA 10%</span>
<span class="t" style="left:596.85px;top:381px;font-size:13px;color:#222;letter-spacing:0.023px;">€ 110,00</span>
<span class="t" style="left:675.98px;top:381px;font-size:13px;color:#222;letter-spacing:0.000px;">1</span>
<span class="t" style="left:756.25px;top:381px;font-size:13px;color:#222;letter-spacing:0.023px;">€ 110,00</span>
<span class="t" style="left:872.75px;top:381px;font-size:13px;color:#222;letter-spacing:-0.034px;">-€ 110,00</span>
<span class="t" style="left:961.08px;top:381px;font-size:13px;color:#222;letter-spacing:0.000px;">1</span>
<span class="t" style="left:1062.55px;top:381px;font-size:13px;color:#222;letter-spacing:-0.034px;">-€ 110,00</span>
<span class="t" style="left:178.15px;top:411px;font-size:13px;color:#222;letter-spacing:0.000px;transform:scaleX(0.9460);transform-origin:0 0;">Camera Singola - Ca...</span>
<span class="t" style="left:350.55px;top:411px;font-size:13px;color:#222;letter-spacing:0.536px;">22/10/2025</span>
<span class="t" style="left:471.75px;top:411px;font-size:13px;color:#222;letter-spacing:0.000px;transform:scaleX(0.9590);transform-origin:0 0;">IVA 10%</span>
<span class="t" style="left:604.25px;top:411px;font-size:13px;color:#222;letter-spacing:-0.163px;">€ 95,00</span>
<span class="t" style="left:675.98px;top:411px;font-size:13px;color:#222;letter-spacing:0.000px;">1</span>
<span class="t" style="left:763.65px;top:411px;font-size:13px;color:#222;letter-spacing:-0.163px;">€ 95,00</span>
<span class="t" style="left:880.25px;top:411px;font-size:13px;color:#222;letter-spacing:0.000px;transform:scaleX(0.9685);transform-origin:0 0;">-€ 95,00</span>
<span class="t" style="left:961.08px;top:411px;font-size:13px;color:#222;letter-spacing:0.000px;">1</span>
<span class="t" style="left:1070.05px;top:411px;font-size:13px;color:#222;letter-spacing:0.000px;transform:scaleX(0.9685);transform-origin:0 0;">-€ 95,00</span>
<span class="t" style="left:178.15px;top:441px;font-size:13px;color:#222;letter-spacing:-0.076px;">Camera Doppia/Matri...</span>
<span class="t" style="left:350.55px;top:441px;font-size:13px;color:#222;letter-spacing:0.536px;">22/10/2025</span>
<span class="t" style="left:471.75px;top:441px;font-size:13px;color:#222;letter-spacing:0.000px;transform:scaleX(0.9590);transform-origin:0 0;">IVA 10%</span>
<span class="t" style="left:596.85px;top:441px;font-size:13px;color:#222;letter-spacing:0.023px;">€ 110,00</span>
<span class="t" style="left:675.98px;top:441px;font-size:13px;color:#222;letter-spacing:0.000px;">1</span>
<span class="t" style="left:756.25px;top:441px;font-size:13px;color:#222;letter-spacing:0.023px;">€ 110,00</span>
<span class="t" style="left:872.75px;top:441px;font-size:13px;color:#222;letter-spacing:-0.034px;">-€ 110,00</span>
<span class="t" style="left:961.08px;top:441px;font-size:13px;color:#222;letter-spacing:0.000px;">1</span>
<span class="t" style="left:1062.55px;top:441px;font-size:13px;color:#222;letter-spacing:-0.034px;">-€ 110,00</span>
<span class="t" style="left:178.15px;top:471px;font-size:13px;color:#222;letter-spacing:-0.076px;">Camera Doppia/Matri...</span>
<span class="t" style="left:350.55px;top:471px;font-size:13px;color:#222;letter-spacing:0.536px;">22/10/2025</span>
<span class="t" style="left:471.75px;top:471px;font-size:13px;color:#222;letter-spacing:0.000px;transform:scaleX(0.9590);transform-origin:0 0;">IVA 10%</span>
<span class="t" style="left:596.85px;top:471px;font-size:13px;color:#222;letter-spacing:0.023px;">€ 110,00</span>
<span class="t" style="left:675.98px;top:471px;font-size:13px;color:#222;letter-spacing:0.000px;">1</span>
<span class="t" style="left:756.25px;top:471px;font-size:13px;color:#222;letter-spacing:0.023px;">€ 110,00</span>
<span class="t" style="left:872.75px;top:471px;font-size:13px;color:#222;letter-spacing:-0.034px;">-€ 110,00</span>
<span class="t" style="left:961.08px;top:471px;font-size:13px;color:#222;letter-spacing:0.000px;">1</span>
<span class="t" style="left:1062.55px;top:471px;font-size:13px;color:#222;letter-spacing:-0.034px;">-€ 110,00</span>
<span class="t" style="left:155.05px;top:501px;font-size:13px;color:#222;letter-spacing:-0.133px;">Ded. Acconto - Bonifico - ...</span>
<span class="t" style="left:471.75px;top:501px;font-size:13px;color:#222;letter-spacing:0.000px;transform:scaleX(0.9590);transform-origin:0 0;">IVA 10%</span>
<span class="t" style="left:592.95px;top:501px;font-size:13px;color:#222;letter-spacing:-0.155px;">-€ 700,00</span>
<span class="t" style="left:675.98px;top:501px;font-size:13px;color:#222;letter-spacing:0.000px;">1</span>
<span class="t" style="left:752.35px;top:501px;font-size:13px;color:#222;letter-spacing:-0.155px;">-€ 700,00</span>
<span class="t" style="left:876.65px;top:501px;font-size:13px;color:#222;letter-spacing:-0.116px;">€ 700,00</span>
<span class="t" style="left:961.08px;top:501px;font-size:13px;color:#222;letter-spacing:0.000px;">1</span>
<span class="t" style="left:1066.45px;top:501px;font-size:13px;color:#222;letter-spacing:-0.116px;">€ 700,00</span>
<span class="t" style="left:178.15px;top:531px;font-size:13px;color:#222;letter-spacing:-0.015px;">Ded. Acconto - Bonifico</span>
<span class="t" style="left:350.55px;top:531px;font-size:13px;color:#222;letter-spacing:0.536px;">20/10/2025</span>
<span class="t" style="left:471.75px;top:531px;font-size:13px;color:#222;letter-spacing:0.000px;transform:scaleX(0.9590);transform-origin:0 0;">IVA 10%</span>
<span class="t" style="left:592.95px;top:531px;font-size:13px;color:#222;letter-spacing:-0.155px;">-€ 700,00</span>
<span class="t" style="left:675.98px;top:531px;font-size:13px;color:#222;letter-spacing:0.000px;">1</span>
<span class="t" style="left:752.35px;top:531px;font-size:13px;color:#222;letter-spacing:-0.155px;">-€ 700,00</span>
<span class="t" style="left:876.65px;top:531px;font-size:13px;color:#222;letter-spacing:-0.116px;">€ 700,00</span>
<span class="t" style="left:961.08px;top:531px;font-size:13px;color:#222;letter-spacing:0.000px;">1</span>
<span class="t" style="left:1066.45px;top:531px;font-size:13px;color:#222;letter-spacing:-0.116px;">€ 700,00</span>
<span class="t" style="left:863.70px;top:689px;font-size:12px;color:#222;letter-spacing:0.227px;">Totale fatturato</span>
<span class="t" style="left:1024.75px;top:689px;font-size:12px;color:#222;letter-spacing:0.142px;">Totale stornato</span>
<span class="t" style="left:875.15px;top:709px;font-size:16px;color:#222;letter-spacing:0.023px;">€ 150,</span>
<span class="t" style="left:920.33px;top:709px;font-size:12.8px;color:#222;letter-spacing:0.000px;">00</span>
<span class="t" style="left:1035.05px;top:709px;font-size:16px;color:#222;letter-spacing:0.023px;">€ 150,</span>
<span class="t" style="left:1080.23px;top:709px;font-size:12.8px;color:#222;letter-spacing:0.000px;">00</span>
<span class="t" style="left:40.85px;top:746px;font-size:14px;color:#b9b9b9;letter-spacing:0.000px;-webkit-text-stroke:.3px #b9b9b9;transform:scaleX(0.9299);transform-origin:0 0;">INDIETRO</span>
<span class="t" style="left:559.78px;top:747px;font-size:13px;color:#fff;letter-spacing:0.000px;-webkit-text-stroke:.3px #fff;">1</span>
<span class="t" style="left:591.38px;top:747px;font-size:13px;color:#fff;letter-spacing:0.000px;-webkit-text-stroke:.3px #fff;">2</span>
<span class="t" style="left:906.35px;top:746px;font-size:12px;color:#787878;letter-spacing:0.014px;-webkit-text-stroke:0;">Mostra documento</span>
<span class="t" style="left:1053.55px;top:746px;font-size:14px;font-weight:700;color:#fff;letter-spacing:-0.189px;">AVANTI</span>
</div>
<div class="abs" style="left:1224px;top:725.300px;width:149.200px;height:60px;border:6px solid #fe0000"></div>
</body>
</html>
